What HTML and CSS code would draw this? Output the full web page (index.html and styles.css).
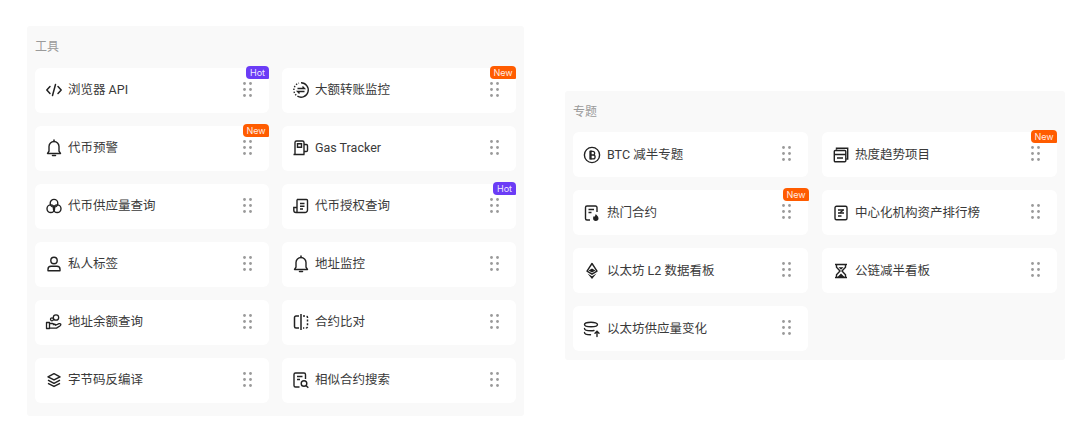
FILE: index.html
```html
<!DOCTYPE html>
<html lang="zh-CN">
<head>
<meta charset="utf-8">
<title>工具与专题</title>
<link rel="stylesheet" href="styles.css">
</head>
<body>
<svg class="defs" aria-hidden="true">
  <symbol id="grip" viewBox="0 0 9 15"><g fill="#9a9a9a"><circle cx="1.5" cy="1.5" r="1.4"/><circle cx="7.5" cy="1.5" r="1.4"/><circle cx="1.5" cy="7.5" r="1.4"/><circle cx="7.5" cy="7.5" r="1.4"/><circle cx="1.5" cy="13.5" r="1.4"/><circle cx="7.5" cy="13.5" r="1.4"/></g></symbol>
  <symbol id="bell" viewBox="0 0 18 18"><path d="M2.500 14.500h13l-1.500-2.300V7.500a5 5 0 0 0-10 0v4.700l-1.500 2.300z" fill="none" stroke="currentColor" stroke-width="1.400" stroke-linejoin="round"/><path d="M7.500 16.600h3M9 .9v1.500" stroke="currentColor" stroke-width="1.500" stroke-linecap="round"/></symbol>
</svg>
<main class="canvas">
  <section class="panel panel-tools">
    <h2 class="panel-title">工具</h2>
    <div class="grid">
      <a class="card"><svg class="icon" viewBox="0 0 18 18"><path d="M5 5.500 1.800 9 5 12.500M13 5.500 16.200 9 13 12.500M10.500 3.500l-3 11" fill="none" stroke="currentColor" stroke-width="1.500" stroke-linecap="round" stroke-linejoin="round"/></svg><span class="label">浏览器 API</span><svg class="grip"><use href="#grip"/></svg><span class="badge hot">Hot</span></a>
      <a class="card"><svg class="icon" viewBox="0 0 18 18"><path d="M9 1.800a7.200 7.200 0 1 1-3.600 13.400" fill="none" stroke="currentColor" stroke-width="1.400"/><path d="M4.200 14.300A7.200 7.200 0 0 1 7 2.100" fill="none" stroke="currentColor" stroke-width="1.400" stroke-dasharray="1.400 1.500"/><path d="M5.500 7.500h7l-2-2M12.500 10.500h-7l2 2" fill="none" stroke="currentColor" stroke-width="1.300"/></svg><span class="label">大额转账监控</span><svg class="grip"><use href="#grip"/></svg><span class="badge new">New</span></a>
      <a class="card"><svg class="icon"><use href="#bell"/></svg><span class="label">代币预警</span><svg class="grip"><use href="#grip"/></svg><span class="badge new">New</span></a>
      <a class="card"><svg class="icon" viewBox="0 0 18 18"><path d="M1.500 15.500h11M3 15.500V3.500a1.500 1.500 0 0 1 1.500-1.500h6a1.500 1.500 0 0 1 1.500 1.500v12M5.500 4.800h4v3.400h-4zM12 5.500h2.300a1.200 1.200 0 0 1 1.200 1.200v4.500a1.300 1.300 0 0 1-1.300 1.300H12" fill="none" stroke="currentColor" stroke-width="1.400"/></svg><span class="label">Gas Tracker</span><svg class="grip"><use href="#grip"/></svg></a>
      <a class="card"><svg class="icon" viewBox="0 0 18 18"><g fill="none" stroke="currentColor" stroke-width="1.400"><circle cx="9" cy="6.200" r="3.800"/><circle cx="5.800" cy="11.700" r="3.800"/><circle cx="12.200" cy="11.700" r="3.800"/></g></svg><span class="label">代币供应量查询</span><svg class="grip"><use href="#grip"/></svg></a>
      <a class="card"><svg class="icon" viewBox="0 0 18 18"><path d="M5 2.500h9.500a1 1 0 0 1 1 1V13a2.500 2.500 0 0 1-2.500 2.500H4A2.300 2.300 0 0 1 1.800 13.200V10.500H5M5 15.300V2.500M8 6.500h4.500M8 9.300h4.500M8 12h3" fill="none" stroke="currentColor" stroke-width="1.400"/></svg><span class="label">代币授权查询</span><svg class="grip"><use href="#grip"/></svg><span class="badge hot">Hot</span></a>
      <a class="card"><svg class="icon" viewBox="0 0 18 18"><g fill="none" stroke="currentColor" stroke-width="1.400"><circle cx="9" cy="5.500" r="3.200"/><path d="M3 15.800v-1.600a3 3 0 0 1 3-3h6a3 3 0 0 1 3 3v1.600z" stroke-linejoin="round"/></g></svg><span class="label">私人标签</span><svg class="grip"><use href="#grip"/></svg></a>
      <a class="card"><svg class="icon"><use href="#bell"/></svg><span class="label">地址监控</span><svg class="grip"><use href="#grip"/></svg></a>
      <a class="card"><svg class="icon" viewBox="0 0 18 18"><g fill="none" stroke="currentColor" stroke-width="1.300" stroke-linejoin="round"><circle cx="11" cy="4.500" r="2.700"/><circle cx="7" cy="6.300" r="1.500"/><path d="M1.500 9.500h3v6h-3zM4.500 10.500h3.300l3 1.200h-3M10 12.500l4-1.800c1.700-.6 2.500 1 1.200 2l-3.700 2.400H4.500"/></g></svg><span class="label">地址余额查询</span><svg class="grip"><use href="#grip"/></svg></a>
      <a class="card"><svg class="icon" viewBox="0 0 18 18"><path d="M9 1v16M7 3H4a1.500 1.500 0 0 0-1.500 1.500v9A1.500 1.500 0 0 0 4 15h3" fill="none" stroke="currentColor" stroke-width="1.500"/><path d="M11 3h3a1.500 1.500 0 0 1 1.500 1.500v9A1.500 1.500 0 0 1 14 15h-3" fill="none" stroke="currentColor" stroke-width="1.500" stroke-dasharray="2 1.600"/></svg><span class="label">合约比对</span><svg class="grip"><use href="#grip"/></svg></a>
      <a class="card"><svg class="icon" viewBox="0 0 18 18"><path d="m9 2.700 6 3.100-6 3.100-6-3.100zM3 9.200l6 3.100 6-3.100M3 12.300l6 3.100 6-3.100" fill="none" stroke="currentColor" stroke-width="1.500" stroke-linejoin="round"/></svg><span class="label">字节码反编译</span><svg class="grip"><use href="#grip"/></svg></a>
      <a class="card"><svg class="icon" viewBox="0 0 18 18"><g fill="none" stroke="currentColor" stroke-width="1.400"><path d="M7.500 16H3.500A1.500 1.500 0 0 1 2 14.500V3.500A1.500 1.500 0 0 1 3.500 2h8.500A1.500 1.500 0 0 1 13.500 3.500V8M5 5.500h5.500M5 8.500h3"/><circle cx="12" cy="12.500" r="2.800"/><path d="m14 14.500 2.300 2.300"/></g></svg><span class="label">相似合约搜索</span><svg class="grip"><use href="#grip"/></svg></a>
    </div>
  </section>
  <section class="panel panel-topics">
    <h2 class="panel-title">专题</h2>
    <div class="grid">
      <a class="card"><svg class="icon" viewBox="0 0 18 18"><circle cx="9" cy="9" r="7.600" fill="none" stroke="currentColor" stroke-width="1.400"/><path d="M7 5.300h2.800a1.800 1.800 0 0 1 0 3.700H7zM7 9h3.200a1.900 1.900 0 0 1 0 3.800H7zM8 4.300v9.500" fill="none" stroke="currentColor" stroke-width="1.300"/></svg><span class="label">BTC 减半专题</span><svg class="grip"><use href="#grip"/></svg></a>
      <a class="card"><svg class="icon" viewBox="0 0 18 18"><g fill="none" stroke="currentColor" stroke-width="1.400"><path d="M4.500 3.800V2.300h11.200V13h-1.500"/><rect x="2.300" y="4.500" width="11.500" height="11.300" rx="1"/><path d="M2.300 8.500h11.500M5 12h6"/></g></svg><span class="label">热度趋势项目</span><svg class="grip"><use href="#grip"/></svg><span class="badge new">New</span></a>
      <a class="card"><svg class="icon" viewBox="0 0 18 18"><g fill="none" stroke="currentColor" stroke-width="1.400"><path d="M7 16H4a1.500 1.500 0 0 1-1.500-1.500v-11A1.500 1.500 0 0 1 4 2h8.500A1.500 1.500 0 0 1 14 3.500V8M5.500 5.500H11M5.500 8.500h3"/></g><path d="M12.800 10c.4 1.200 2.700 2 2.700 4.200a2.700 2.700 0 0 1-5.400 0c0-1 .5-1.700 1.100-2.100.2.500.4.800.7.900.1-1 .4-2.100.9-3z" fill="currentColor"/></svg><span class="label">热门合约</span><svg class="grip"><use href="#grip"/></svg><span class="badge new">New</span></a>
      <a class="card"><svg class="icon" viewBox="0 0 18 18"><g fill="none" stroke="currentColor" stroke-width="1.400"><rect x="3" y="2.300" width="12" height="13.400" rx="1.500"/><path d="M6 6h6M6 9h6M6 12h3.500"/><path d="m8 9 3-3"/></g></svg><span class="label">中心化机构资产排行榜</span><svg class="grip"><use href="#grip"/></svg></a>
      <a class="card"><svg class="icon" viewBox="0 0 18 18"><path d="m9 1.500 5 7.700-5 3-5-3z" fill="none" stroke="currentColor" stroke-width="1.400" stroke-linejoin="round"/><path d="m5.500 8.500 3.500-2 3.500 2-3.500 2z" fill="currentColor"/><path d="m4.500 11.500 4.500 2.800 4.500-2.800L9 17z" fill="currentColor"/></svg><span class="label">以太坊 L2 数据看板</span><svg class="grip"><use href="#grip"/></svg></a>
      <a class="card"><svg class="icon" viewBox="0 0 18 18"><path d="M3 2.500h12M3 15.500h12M4.500 2.500v2.800L8 9l-3.500 3.700v2.800M13.500 2.500v2.800L10 9l3.500 3.700v2.800" fill="none" stroke="currentColor" stroke-width="1.400"/><path d="M6.500 5.300h5L9 7.800zM5.500 15 9 11.500l3.500 3.500z" fill="currentColor"/></svg><span class="label">公链减半看板</span><svg class="grip"><use href="#grip"/></svg></a>
      <a class="card"><svg class="icon" viewBox="0 0 18 18"><g fill="none" stroke="currentColor" stroke-width="1.400" stroke-linecap="round"><ellipse cx="8" cy="4.500" rx="6.500" ry="2.300"/><path d="M1.500 8.500c0 1.300 3 2.300 6.500 2.300 1 0 2-.1 3-.3M1.500 12.500c0 1.300 2.500 2.300 6 2.300M14 16.500v-5M12 13.300l2-2 2 2"/></g></svg><span class="label">以太坊供应量变化</span><svg class="grip"><use href="#grip"/></svg></a>
    </div>
  </section>
</main>
</body>
</html>
```

FILE: styles.css
```css
* { box-sizing: border-box; }
html, body { margin: 0; padding: 0; background: #fff; }
body { font-family: "Roboto", "Noto Sans CJK SC", sans-serif; color: #333; }
.defs { display: none; }
.canvas { display: flex; align-items: flex-start; padding: 26px 15px 0 27px; gap: 41px; width: 1080px; height: 444px; overflow: hidden; }
.panel { background: #f9f9f9; border-radius: 3px; padding: 0 8px; width: 497px; }
.panel-tools { height: 390px; }
.panel-tools .panel-title { height: 42px; }
.panel-topics { width: 500px; height: 269px; margin-top: 65px; }
.panel-title { margin: 0; height: 41px; padding-top: 12px; font-size: 12px; line-height: 18px; font-weight: 400; color: #9a9a9a; }
.grid { display: grid; grid-template-columns: 234px 234px; column-gap: 13px; row-gap: 13px; grid-auto-rows: 45px; }
.panel-topics .grid { column-gap: 14px; grid-template-columns: 235px 235px; }
.card { position: relative; display: flex; align-items: center; background: #fff; border-radius: 6px; padding: 0 17px 2px 10px; }
.panel-topics .card { padding-bottom: 0; }
.panel-topics .grip { margin-top: -3px; }
.icon { width: 18px; height: 18px; flex: none; color: #222; margin-right: 5px; }
.panel-topics .card:nth-child(odd) .icon { margin-right: 6px; }
.label { flex: 1; font-size: 12.5px; line-height: 18px; color: #3a3a3a; white-space: nowrap; }
.grip { width: 9px; height: 15px; flex: none; margin-top: -1px; }
.badge { position: absolute; top: -2px; right: 0; height: 13px; border-radius: 4px 4px 1px 4px; font-size: 9px; line-height: 13px; text-align: center; font-family: "Inter", "Liberation Sans", sans-serif; color: rgba(255,255,255,.9); }
.panel-topics .card:nth-child(odd) .badge { right: -1px; }
.hot { width: 23px; background: #6b3cf6; }
.new { width: 26px; background: #ff5c00; }
```
